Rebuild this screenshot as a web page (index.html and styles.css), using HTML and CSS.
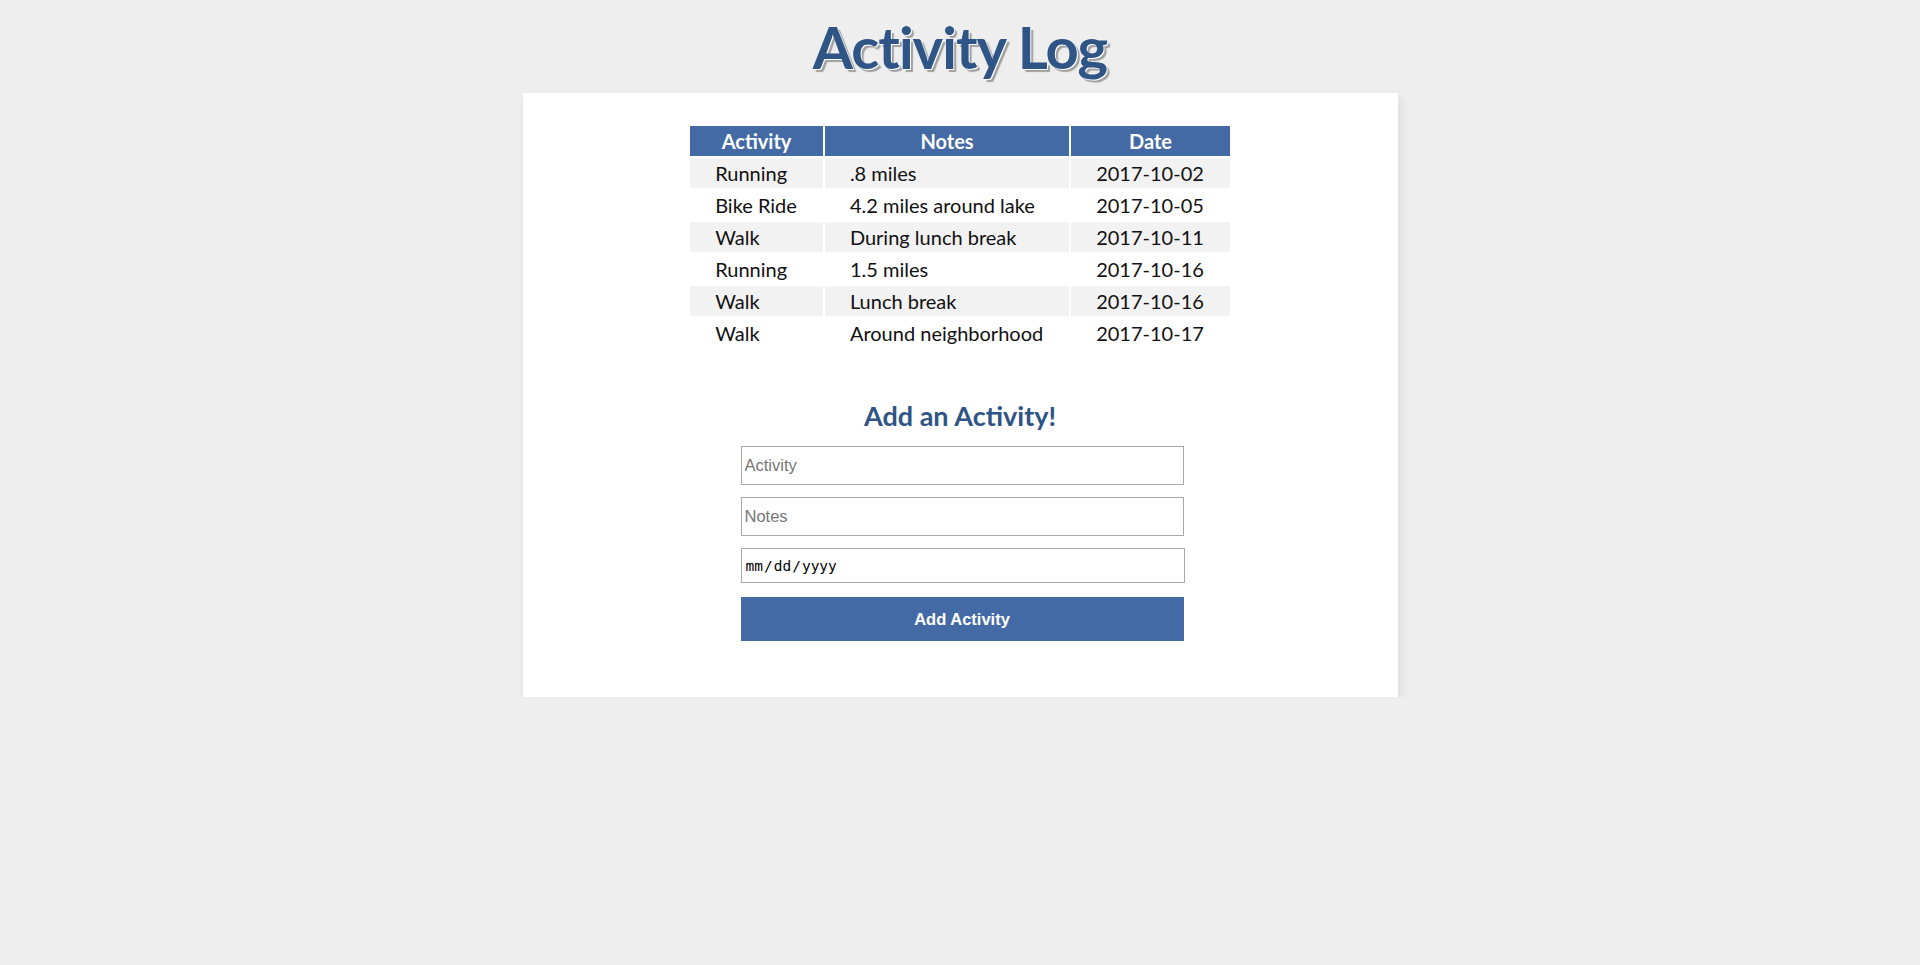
FILE: index.html
```html
<!DOCTYPE html>
<html lang="en">
<head>
<meta charset="utf-8">
<title>Activity Log</title>
<link rel="stylesheet" href="styles.css">
</head>
<body>
<h1 class="title">Activity Log</h1>
<main class="card">
  <table class="log">
    <thead>
      <tr><th>Activity</th><th>Notes</th><th>Date</th></tr>
    </thead>
    <tbody>
      <tr><td>Running</td><td>.8 miles</td><td>2017-10-02</td></tr>
      <tr><td>Bike Ride</td><td>4.2 miles around lake</td><td>2017-10-05</td></tr>
      <tr><td>Walk</td><td>During lunch break</td><td>2017-10-11</td></tr>
      <tr><td>Running</td><td>1.5 miles</td><td>2017-10-16</td></tr>
      <tr><td>Walk</td><td>Lunch break</td><td>2017-10-16</td></tr>
      <tr><td>Walk</td><td>Around neighborhood</td><td>2017-10-17</td></tr>
    </tbody>
  </table>
  <h2 class="form-title">Add an Activity!</h2>
  <form class="add-form">
    <input class="field" type="text" placeholder="Activity">
    <input class="field" type="text" placeholder="Notes">
    <input class="field date" type="date">
    <button class="submit" type="button">Add Activity</button>
  </form>
</main>
</body>
</html>
```

FILE: styles.css
```css
* { box-sizing: border-box; }

body {
  margin: 0;
  background: #eeeeee;
  font-family: Lato, "Open Sans", sans-serif;
  color: #111;
}

.title {
  margin: 11px 0 10px;
  text-align: center;
  font-size: 58px;
  line-height: 72px;
  font-weight: 700;
  color: #2f5486;
  letter-spacing: -1px;
  text-shadow: 1px 1px 0 #fff, 3px 3px 1px #a0a0a0;
}

.card {
  width: 875px;
  margin: 0 auto;
  background: #fff;
  padding: 31px 0 56px;
  box-shadow: 3px 4px 10px rgba(0, 0, 0, 0.08);
}

.log {
  margin: 0 auto;
  border-collapse: separate;
  border-spacing: 2px;
  font-size: 20px;
}

.log th {
  height: 30px;
  padding: 0 25px;
  background: #436aa4;
  color: #fff;
  font-weight: 700;
  text-align: center;
}

.log td {
  height: 30px;
  padding: 0 26px 0 25px;
  text-align: left;
  color: #111;
  white-space: nowrap;
}

.log tbody tr:nth-child(odd) td {
  background: #f2f2f2;
}

.form-title {
  margin: 49px 0 13px;
  text-align: center;
  font-size: 27px;
  line-height: 34px;
  font-weight: 700;
  color: #2f5486;
}

.add-form {
  width: 443px;
  margin: 0 0 0 218px;
  display: flex;
  flex-direction: column;
}

.field {
  height: 39px;
  margin: 0 0 12px;
  padding: 1px 3px;
  border: 1px solid #a9a9a9;
  font-family: "Liberation Sans", Arial, sans-serif;
  font-size: 16.5px;
  color: #111;
  background: #fff;
}

.field::placeholder { color: #757575; }

.field.date {
  height: 35px;
  width: 444px;
  margin-bottom: 14px;
  font-family: "DejaVu Sans Mono", monospace;
  font-size: 14.5px;
  color: #000;
}

.field.date::-webkit-calendar-picker-indicator { display: none; }

.submit {
  height: 44px;
  border: 0;
  background: #436aa5;
  color: #fff;
  font-family: "Liberation Sans", Arial, sans-serif;
  font-size: 16.5px;
  font-weight: 700;
  cursor: pointer;
}
```
